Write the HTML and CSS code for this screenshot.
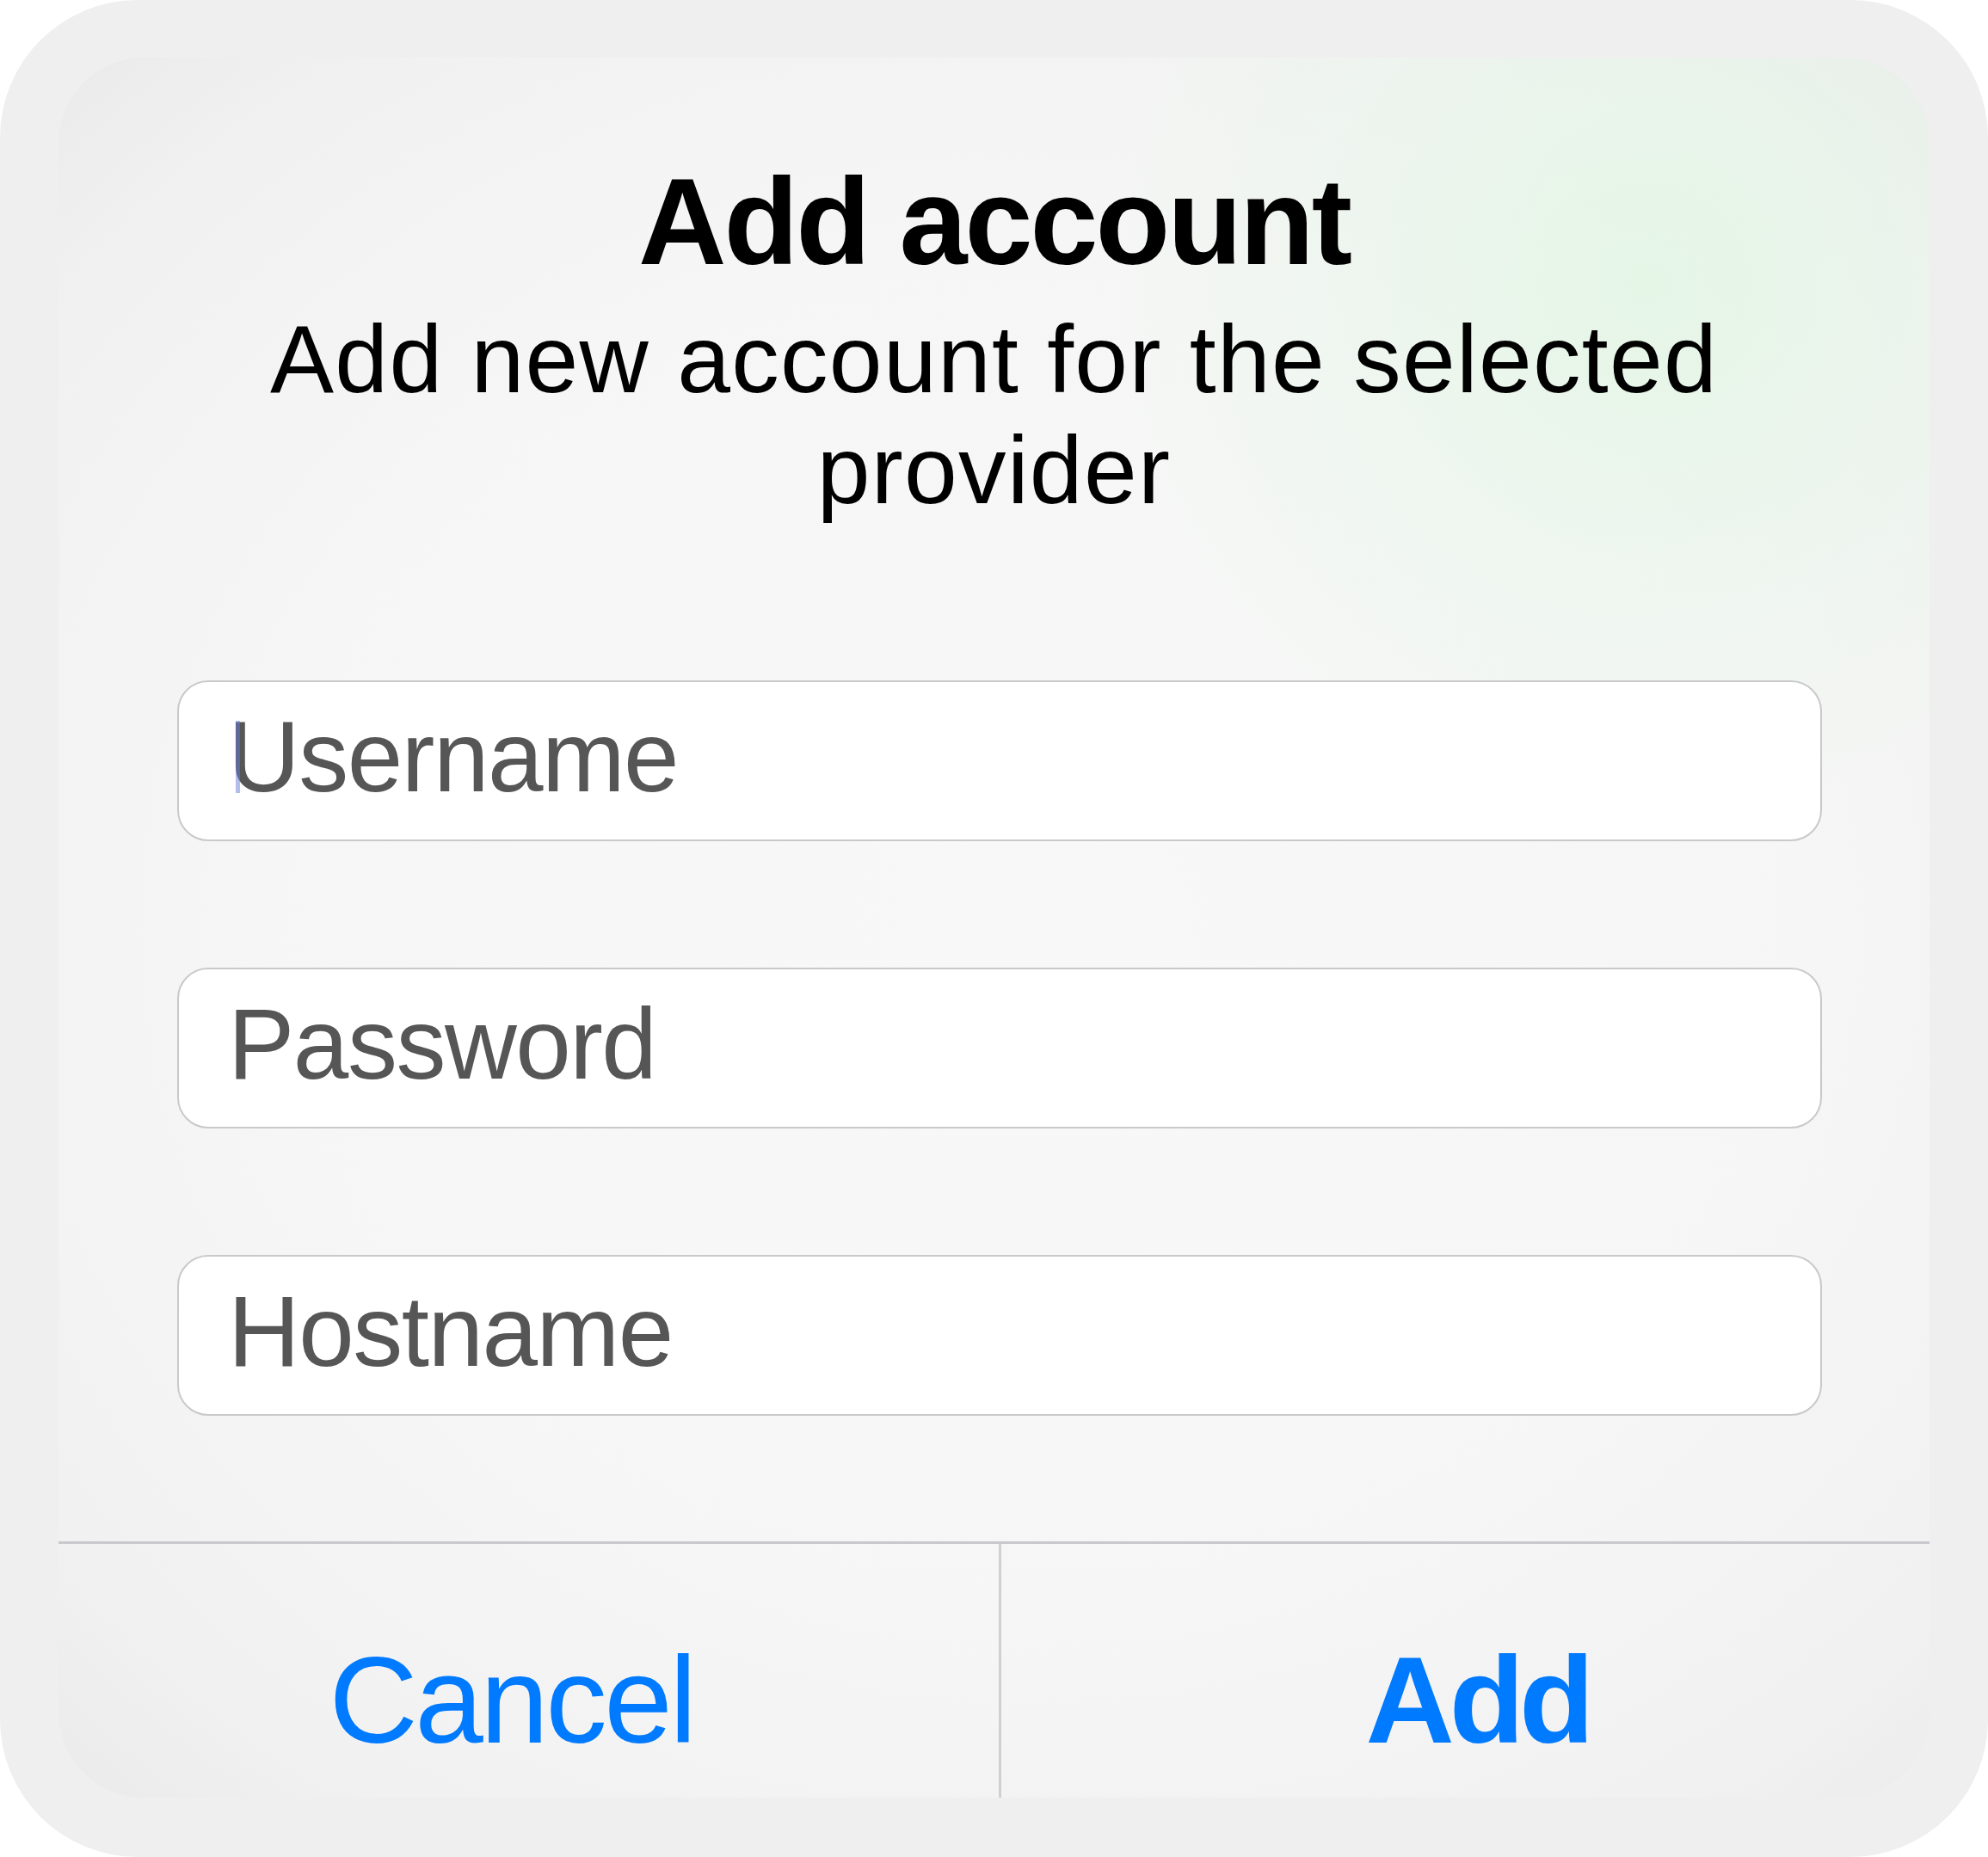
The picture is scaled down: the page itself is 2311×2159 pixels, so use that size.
FILE: index.html
```html
<!DOCTYPE html>
<html lang="en">
<head>
<meta charset="utf-8">
<title>Add account</title>
<link rel="stylesheet" href="styles.css">
</head>
<body>
<div class="frame">
  <div class="panel">
    <div class="header">
      <h1 class="title">Add account</h1>
      <p class="subtitle">Add new account for the selected provider</p>
    </div>
    <div class="fields">
      <div class="field"><span class="caret"></span><span class="placeholder">Username</span></div>
      <div class="field"><span class="placeholder">Password</span></div>
      <div class="field"><span class="placeholder">Hostname</span></div>
    </div>
    <div class="actions">
      <div class="action cancel">Cancel</div>
      <div class="action add">Add</div>
    </div>
  </div>
</div>
</body>
</html>
```
FILE: styles.css
```css
html, body {
  margin: 0;
  padding: 0;
  background: #ffffff;
}

body {
  font-family: "Liberation Sans", Arial, Helvetica, sans-serif;
}

.frame {
  width: 2311px;
  height: 2159px;
  box-sizing: border-box;
  padding: 67px 68px 69px 68px;
  background: #efefef;
  border-radius: 160px;
  display: flex;
}

.panel {
  flex: 1;
  display: flex;
  flex-direction: column;
  border-radius: 100px;
  overflow: hidden;
  background:
    radial-gradient(circle at 85% 13%, rgba(226, 246, 228, 0.85) 0%, rgba(226, 246, 228, 0.35) 14%, rgba(226, 246, 228, 0) 26%),
    radial-gradient(ellipse 75% 70% at 52% 50%, #f8f8f8 0%, #f6f6f6 55%, #f1f1f1 85%, #eaeaea 100%);
}

.header {
  padding-top: 109px;
  text-align: center;
  color: #000;
}

.title {
  margin: 0;
  font-size: 142px;
  line-height: 163px;
  font-weight: bold;
  letter-spacing: -3px;
}

.subtitle {
  margin: 15px auto 0;
  max-width: 1800px;
  font-size: 111px;
  line-height: 129px;
  letter-spacing: 1.3px;
  font-weight: normal;
}

.fields {
  margin-top: 179px;
  padding: 0 125px 0 138px;
  display: flex;
  flex-direction: column;
  gap: 147px;
}

.field {
  height: 187px;
  box-sizing: border-box;
  background: #ffffff;
  border: 2px solid #c9c9c9;
  border-radius: 36px;
  display: flex;
  align-items: center;
  padding-left: 57px;
  padding-bottom: 10px;
}

.caret {
  position: relative;
  z-index: 1;
  display: inline-block;
  width: 5px;
  height: 84px;
  margin-top: 0;
  margin-left: 9px;
  margin-right: -14px;
  background: rgba(100, 125, 215, 0.5);
}

.placeholder {
  font-size: 116px;
  letter-spacing: -1.5px;
  color: #565656;
  line-height: 1;
}

.actions {
  margin-top: 146px;
  flex: 1;
  display: grid;
  grid-template-columns: 1096px 1fr;
  border-top: 3px solid #c9c9cd;
}

.action {
  padding-top: 110px;
  font-size: 143px;
  line-height: 144px;
  color: #007aff;
  text-align: center;
}

.cancel {
  border-right: 3px solid #d0d0d4;
  padding-right: 40px;
  letter-spacing: -3.5px;
}

.add {
  font-weight: bold;
  padding-left: 28px;
  letter-spacing: -6px;
}
```
